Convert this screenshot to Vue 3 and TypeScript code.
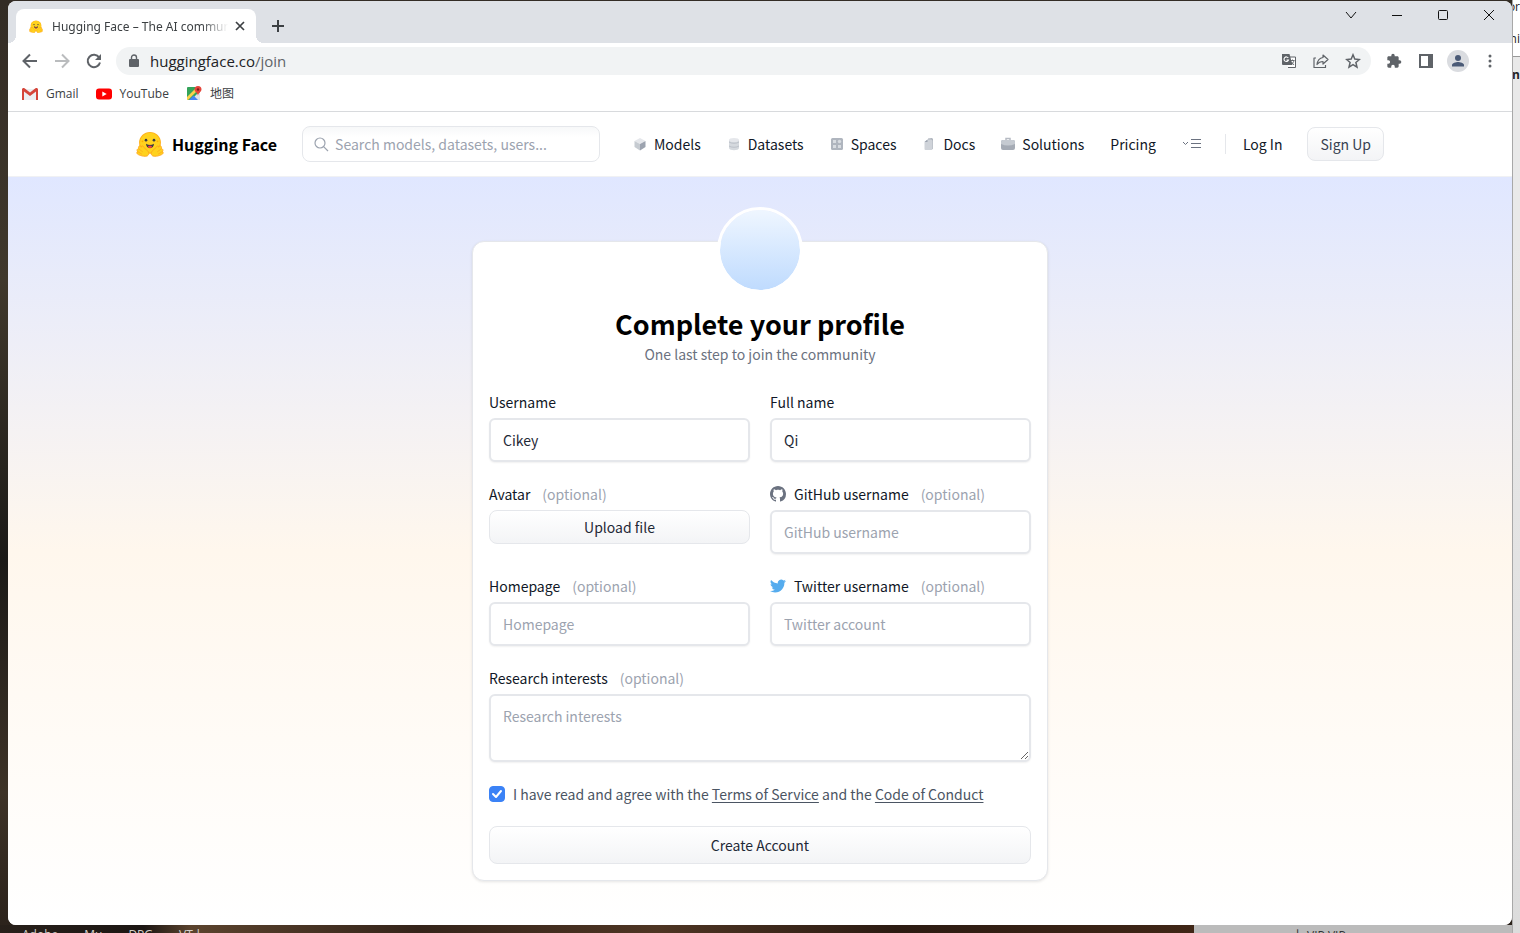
<script setup lang="ts">
import { ref } from 'vue'

const username = ref('Cikey')
const fullName = ref('Qi')
const github = ref('')
const homepage = ref('')
const twitter = ref('')
const interests = ref('')
const agreed = ref(true)
const search = ref('')

type NavIcon = 'cube' | 'data' | 'grid' | 'docs' | 'case' | null
const navItems: { label: string; icon: NavIcon }[] = [
  { label: 'Models', icon: 'cube' },
  { label: 'Datasets', icon: 'data' },
  { label: 'Spaces', icon: 'grid' },
  { label: 'Docs', icon: 'docs' },
  { label: 'Solutions', icon: 'case' },
  { label: 'Pricing', icon: null },
]
const taskLabels = ['Adobe', 'Mu', 'DPG', 'VT-l']
</script>

<template>
  <div class="desktop">
    <svg class="sprites" width="0" height="0" aria-hidden="true">
      <symbol id="hug" viewBox="0 0 95 88">
        <circle cx="47.5" cy="40" r="37" fill="#ffb01a" />
        <circle cx="47.5" cy="40" r="34" fill="#ffd21e" />
        <path d="M15 50c-5-1-8 4-6 10-5 0-7 5-4 9-4 4-2 9 3 11 10 5 24 8 31 4 7-5 5-14-2-19L25 54c-2-5-7-6-7 1zM80 50c5-1 8 4 6 10 5 0 7 5 4 9 4 4 2 9-3 11-10 5-24 8-31 4-7-5-5-14 2-19l12-11c2-5 7-6 7 1z" fill="#ffd21e" stroke="#ffa51c" stroke-width="3" stroke-linejoin="round" />
        <path d="M10 61l12 9M6 70l13 8M85 61l-12 9M89 70l-13 8" stroke="#ffa51c" stroke-width="2.500" stroke-linecap="round" />
        <circle cx="34" cy="31" r="4.500" fill="#3a3b45" /><circle cx="61" cy="31" r="4.500" fill="#3a3b45" />
        <circle cx="22" cy="35" r="3" fill="#ffad03" /><circle cx="73" cy="35" r="3" fill="#ffad03" />
        <path d="M34 43c5 3 9 4 13.500 4s8.500-1 13.500-4c0 9-6 15-13.500 15S34 52 34 43" fill="#3a3b45" />
        <path d="M40 53c3-4 6-3 7.500-2 1.500-1 4.500-2 7.500 2-4 6-11 6-15 0" fill="#f94040" />
      </symbol>
    </svg>

    <main class="window">
      <header class="tabstrip">
        <div class="tab">
          <svg class="favicon" viewBox="0 0 95 88"><use href="#hug" /></svg>
          <span class="tab-title">Hugging Face – The AI community building the future.</span>
          <button class="bare" aria-label="Close tab">
            <svg width="10" height="10" viewBox="0 0 10 10" stroke="#3c4043" stroke-width="1.700"><path d="M1 1l8 8M9 1l-8 8" /></svg>
          </button>
        </div>
        <button class="bare new-tab" aria-label="New tab">
          <svg width="12" height="12" viewBox="0 0 12 12" stroke="#3c4043" stroke-width="2"><path d="M6 0v12M0 6h12" /></svg>
        </button>
        <div class="controls">
          <button class="bare" aria-label="Search tabs"><svg width="12" height="12" viewBox="0 0 12 12"><path d="M1 3l5 6 5-6" /></svg></button>
          <button class="bare" aria-label="Minimize"><svg width="12" height="12" viewBox="0 0 12 12"><path d="M1 6.500h10" /></svg></button>
          <button class="bare" aria-label="Maximize"><svg width="12" height="12" viewBox="0 0 12 12"><rect x="1.500" y="1.500" width="9" height="9" rx="1" /></svg></button>
          <button class="bare" aria-label="Close"><svg width="12" height="12" viewBox="0 0 12 12"><path d="M1 1l10 10M11 1L1 11" /></svg></button>
        </div>
      </header>

      <div class="toolbar">
        <button class="bare" aria-label="Back"><svg width="16" height="16" viewBox="0 0 16 16" fill="none" stroke="#5f6368" stroke-width="2"><path d="M15 8H2M8 1.500L1.500 8 8 14.500" /></svg></button>
        <button class="bare" aria-label="Forward"><svg width="16" height="16" viewBox="0 0 16 16" fill="none" stroke="#babcbe" stroke-width="2"><path d="M1 8h13M8 1.500L14.500 8 8 14.500" /></svg></button>
        <button class="bare" aria-label="Reload"><svg width="16" height="16" viewBox="0 0 16 16"><path d="M13.200 4.600A6.200 6.200 0 1 0 14 9.500" fill="none" stroke="#5f6368" stroke-width="2" /><path d="M15 1v6H9z" fill="#5f6368" /></svg></button>
        <div class="omnibox">
          <svg width="10" height="14" viewBox="0 0 10 14"><rect x="0" y="5" width="10" height="8" rx="1" fill="#5f6368" /><path d="M2.500 6V3.500a2.500 2.500 0 0 1 5 0V6" fill="none" stroke="#5f6368" stroke-width="1.400" /></svg>
          <span class="url">huggingface.co<span class="path">/join</span></span>
          <button class="bare" aria-label="Translate">
            <svg width="16" height="16" viewBox="0 0 16 16"><path d="M5 4h9.500v10.500H7" fill="#fff" stroke="#5f6368" /><path d="M1 1h7.500l3 11H2a1 1 0 0 1-1-1z" fill="#5f6368" /><path d="M7.300 5A2.300 2.300 0 1 0 7.500 7H5.500" fill="none" stroke="#fff" stroke-width="1.100" /><path d="M9.500 7.500h4M11.500 6.500v1M13 7.500c-.5 2-1.500 3-3 4M10.500 9l2.500 3" fill="none" stroke="#5f6368" stroke-width=".9" /></svg>
          </button>
          <button class="bare" aria-label="Share">
            <svg width="16" height="16" viewBox="0 0 16 16" fill="none" stroke="#5f6368" stroke-width="1.200" stroke-linejoin="round"><path d="M3 5H1v9.500h11.500V12" /><path d="M10 2l5 4.500-5 4.500V8.500c-3 0-4.500 1-6 3 .5-4 2.500-6.500 6-7z" /></svg>
          </button>
          <button class="bare" aria-label="Bookmark">
            <svg width="16" height="16" viewBox="0 0 16 16" fill="none" stroke="#5f6368" stroke-width="1.500"><path d="M8 1.800l1.800 4.300 4.600.4-3.500 3 1.100 4.600L8 11.700l-4 2.400 1.100-4.600-3.500-3 4.600-.4z" /></svg>
          </button>
        </div>
        <div class="tools">
          <button class="bare" aria-label="Extensions"><svg width="16" height="16" viewBox="0 0 24 24" fill="#5f6368"><path d="M20.500 11H19V7c0-1.100-.9-2-2-2h-4V3.500a2.500 2.500 0 0 0-5 0V5H4c-1.100 0-2 .9-2 2v3.800h1.500a2.700 2.700 0 0 1 0 5.400H2V20c0 1.100.9 2 2 2h3.800v-1.500a2.700 2.700 0 0 1 5.400 0V22H17c1.100 0 2-.9 2-2v-4h1.500a2.500 2.500 0 0 0 0-5" /></svg></button>
          <button class="bare" aria-label="Side panel"><svg width="16" height="16" viewBox="0 0 16 16"><path d="M1 1h14v14H1zm2 2v10h7V3z" fill="#5f6368" fill-rule="evenodd" /></svg></button>
          <button class="bare profile" aria-label="Profile"><svg width="14" height="14" viewBox="0 0 14 14" fill="#4a5a76"><circle cx="7" cy="4" r="3" /><path d="M1 12.500V11c0-2 4-3 6-3s6 1 6 3v1.500z" /></svg></button>
          <button class="bare" aria-label="Menu"><svg width="16" height="16" viewBox="0 0 16 16" fill="#5f6368"><circle cx="8" cy="3" r="1.500" /><circle cx="8" cy="8" r="1.500" /><circle cx="8" cy="13" r="1.500" /></svg></button>
        </div>
      </div>

      <nav class="bookmarks" aria-label="Bookmarks">
        <a href="#"><svg width="16" height="16" viewBox="0 0 16 16"><path d="M2 3h12v11H2z" fill="#eceff1" /><path d="M0 3.500V14h2V5.500L8 10l6-4.500V14h2V3.500c0-1.500-1.500-2-2.500-1.200L8 6.500 2.500 2.300C1.500 1.500 0 2 0 3.500" fill="#d5453a" /></svg>Gmail</a>
        <a href="#"><svg width="16" height="16" viewBox="0 0 16 16"><rect y="2.500" width="16" height="11" rx="3" fill="#f00" /><path d="M6.300 5.500v5L10.700 8z" fill="#fff" /></svg>YouTube</a>
        <a href="#"><svg width="16" height="16" viewBox="0 0 16 16"><rect x="1" y="1" width="13" height="13" rx="1" fill="#34a35a" /><path d="M5 14L13 6l1 1v7z" fill="#dfe3e8" /><path d="M3 14l4.500-4.500L12 14z" fill="#4285f4" /><path d="M1 11l8-8 2 2-9 9H1z" fill="#fbd14b" /><path d="M12 0a3.500 3.500 0 0 0-3.500 3.500C8.500 6 12 7 12 10c0-3 3.500-4 3.500-6.500A3.500 3.500 0 0 0 12 0" fill="#e5443a" /><circle cx="12" cy="3.500" r="1.200" fill="#7c201b" /></svg>地图</a>
      </nav>

      <div class="site">
        <header class="nav">
          <div class="nav-inner">
            <a class="brand" href="#"><svg width="28" height="26" viewBox="0 0 95 88"><use href="#hug" /></svg>Hugging Face</a>
            <label class="search">
              <svg width="16" height="16" viewBox="0 0 16 16" fill="none" stroke="#9ca3af" stroke-width="1.200"><circle cx="7" cy="7" r="5" /><path d="M10.600 10.600L15 15" /></svg>
              <input v-model="search" type="search" aria-label="Search" placeholder="Search models, datasets, users..." />
            </label>
            <nav class="links" aria-label="Main">
              <a v-for="item in navItems" :key="item.label" href="#">
                <svg v-if="item.icon" width="14" height="14" viewBox="0 0 14 14">
                  <g v-if="item.icon === 'cube'"><path d="M7 1l5.500 3L7 7 1.500 4z" fill="#e5e7eb" /><path d="M1.500 4L7 7v6.500L1.500 10z" fill="#c6cbd1" /><path d="M12.500 4L7 7v6.500l5.500-3.500z" fill="#9ca3af" /></g>
                  <g v-else-if="item.icon === 'data'"><path d="M2 3v8c0 3 10 3 10 0V3z" fill="#d5d9de" /><ellipse cx="7" cy="3" rx="5" ry="2" fill="#e5e7eb" /><path d="M2 5c2 1.700 8 1.700 10 0M2 9c2 1.700 8 1.700 10 0" fill="none" stroke="#bcc1c9" /></g>
                  <g v-else-if="item.icon === 'grid'"><rect x="1" y="1" width="12" height="12" rx="1.500" fill="#afb5be" /><path d="M3 3h3v3H3zM3 8h3v3H3zM8 8h3v3H8z" fill="#d8dce1" /><circle cx="9.500" cy="4.500" r="1.700" fill="#d8dce1" /></g>
                  <g v-else-if="item.icon === 'docs'"><path d="M6 1.500L10 1l1 1v10H6z" fill="#aeb4bd" /><path d="M2.500 5l3-2.500H9q1.500 0 1.500 1.500v8q0 1-1 1h-6q-1 0-1-1z" fill="#cfd3d9" /><path d="M2.500 5h3V2.500z" fill="#9ca3af" /></g>
                  <g v-else><path d="M5 3V1.500h4V3" fill="none" stroke="#b6bbc3" stroke-width="1.500" /><rect y="3" width="14" height="10" rx="2" fill="#a5abb5" /><path d="M0 5q0-2 2-2h10q2 0 2 2v2q-7 3-14 0z" fill="#c5cad1" /></g>
                </svg>
                {{ item.label }}
              </a>
              <button class="bare" aria-label="More"><svg width="20" height="14" viewBox="0 0 20 14" fill="none" stroke="#6b7280"><path d="M1 5l2.500 2.500L6 5M9 2.500h10M9 6.500h10M9 10.500h10" /></svg></button>
            </nav>
            <div class="account">
              <a href="#">Log In</a>
              <button class="soft signup">Sign Up</button>
            </div>
          </div>
        </header>

        <section class="hero">
          <form class="card" @submit.prevent>
            <div class="avatar"></div>
            <h1>Complete your profile</h1>
            <p class="subtitle">One last step to join the community</p>
            <div class="fields">
              <div class="field">
                <label for="username">Username</label>
                <input id="username" v-model="username" type="text" />
              </div>
              <div class="field">
                <label for="fullname">Full name</label>
                <input id="fullname" v-model="fullName" type="text" />
              </div>
              <div class="field">
                <label for="upload">Avatar <span class="optional">(optional)</span></label>
                <button id="upload" type="button" class="soft upload">Upload file</button>
              </div>
              <div class="field">
                <label for="github">
                  <svg width="16" height="16" viewBox="0 0 16 16" fill="#6b7280"><path d="M8 0C3.580 0 0 3.580 0 8c0 3.540 2.290 6.530 5.470 7.590.4.070.55-.17.55-.38 0-.19-.01-.82-.01-1.490-2.010.37-2.530-.49-2.690-.94-.09-.23-.48-.94-.82-1.130-.28-.15-.68-.52-.01-.53.63-.01 1.080.58 1.230.82.72 1.210 1.870.87 2.330.66.07-.52.28-.87.51-1.070-1.780-.2-3.640-.89-3.640-3.950 0-.87.31-1.590.82-2.150-.08-.2-.36-1.020.08-2.120 0 0 .67-.21 2.200.82.64-.18 1.320-.27 2-.27s1.360.09 2 .27c1.530-1.040 2.200-.82 2.200-.82.44 1.100.16 1.920.08 2.120.51.56.82 1.270.82 2.150 0 3.070-1.870 3.750-3.650 3.950.29.25.54.73.54 1.480 0 1.070-.01 1.930-.01 2.200 0 .21.15.46.55.38A8.010 8.010 0 0 0 16 8c0-4.420-3.580-8-8-8" /></svg>
                  GitHub username <span class="optional">(optional)</span>
                </label>
                <input id="github" v-model="github" type="text" placeholder="GitHub username" />
              </div>
              <div class="field">
                <label for="homepage">Homepage <span class="optional">(optional)</span></label>
                <input id="homepage" v-model="homepage" type="text" placeholder="Homepage" />
              </div>
              <div class="field">
                <label for="twitter">
                  <svg width="16" height="16" viewBox="0 0 24 24" fill="#55acee"><path d="M23.950 4.570a10 10 0 0 1-2.820.77 4.960 4.960 0 0 0 2.160-2.720c-.95.55-2 .95-3.130 1.180a4.920 4.920 0 0 0-8.380 4.480C7.690 8.090 4.070 6.130 1.640 3.160a4.920 4.920 0 0 0 1.520 6.570 4.900 4.900 0 0 1-2.230-.61v.06c0 2.380 1.700 4.370 3.950 4.830a5 5 0 0 1-2.210.08 4.940 4.940 0 0 0 4.600 3.420A9.870 9.870 0 0 1 0 19.540a13.990 13.990 0 0 0 7.550 2.210c9.050 0 14-7.500 14-13.980 0-.21 0-.42-.02-.63a9.940 9.940 0 0 0 2.420-2.570" /></svg>
                  Twitter username <span class="optional">(optional)</span>
                </label>
                <input id="twitter" v-model="twitter" type="text" placeholder="Twitter account" />
              </div>
              <div class="field wide">
                <label for="interests">Research interests <span class="optional">(optional)</span></label>
                <textarea id="interests" v-model="interests" placeholder="Research interests"></textarea>
              </div>
            </div>
            <div class="terms">
              <input id="agree" v-model="agreed" type="checkbox" />
              <label for="agree">I have read and agree with the <a href="#">Terms of Service</a> and the <a href="#">Code of Conduct</a></label>
            </div>
            <button class="soft create">Create Account</button>
          </form>
        </section>
      </div>
    </main>

    <aside class="behind"><span>or</span><span>ni</span><b>in</b></aside>
    <footer class="shelf">
      <div class="shelf-left"><span v-for="t in taskLabels" :key="t">{{ t }}</span></div>
      <div class="shelf-right">上 VIP VIP</div>
    </footer>
  </div>
</template>

<style>
body {
  margin: 0;
}
</style>

<style scoped>
* {
  box-sizing: border-box;
}
.desktop {
  display: grid;
  grid-template-columns: 8px minmax(0, 1fr) 8px;
  grid-template-rows: auto 8px;
  min-height: 100vh;
  padding-top: 1px;
  background: linear-gradient(180deg, #332c25, #40382c 30%, #1c1a17 60%, #3e3327 85%, #2b221b);
  font-family: 'Noto Sans CJK SC', 'Noto Sans', sans-serif;
  font-size: 14px;
  line-height: 24px;
}
.sprites {
  position: absolute;
}
.window {
  grid-column: 2;
  grid-row: 1;
  display: flex;
  flex-direction: column;
  overflow: hidden;
  border-radius: 8px;
  background: #fff;
}
.bare {
  display: flex;
  align-items: center;
  justify-content: center;
  padding: 0;
  border: 0;
  background: none;
}
svg {
  display: block;
  flex: none;
}
a {
  color: inherit;
  text-decoration: none;
}

.tabstrip {
  display: flex;
  align-items: flex-end;
  height: 42px;
  padding-left: 8px;
  background: #dee1e6;
  font-family: 'Noto Sans', 'Open Sans', sans-serif;
  font-size: 12px;
}
.tab {
  position: relative;
  display: flex;
  align-items: center;
  width: 240px;
  height: 34px;
  padding: 0 11px 0 13px;
  border-radius: 8px 8px 0 0;
  background: #fff;
  color: #3c4043;
}
.tab::before,
.tab::after {
  content: '';
  position: absolute;
  bottom: 0;
  width: 8px;
  height: 8px;
}
.tab::before {
  right: 100%;
  background: radial-gradient(circle at 0 0, transparent 8px, #fff 8px);
}
.tab::after {
  left: 100%;
  background: radial-gradient(circle at 100% 0, transparent 8px, #fff 8px);
}
.favicon {
  width: 14px;
  height: 13px;
}
.tab-title {
  flex: 1;
  margin: 0 7px 0 9px;
  padding-top: 1px;
  overflow: hidden;
  white-space: nowrap;
  mask-image: linear-gradient(90deg, #000 85%, transparent);
}
.new-tab {
  width: 28px;
  height: 34px;
  margin-left: 8px;
}
.controls {
  display: flex;
  align-self: flex-start;
  margin-left: auto;
}
.controls .bare {
  width: 46px;
  height: 28px;
}
.controls svg {
  fill: none;
  stroke: #111;
}

.toolbar {
  display: flex;
  align-items: center;
  gap: 16px;
  height: 36px;
  padding: 0 14px;
}
.omnibox {
  flex: 1;
  display: flex;
  align-items: center;
  gap: 16px;
  height: 28px;
  margin-left: -2px;
  padding: 0 10px 0 13px;
  border-radius: 14px;
  background: #f1f3f4;
}
.url {
  flex: 1;
  margin-left: -5px;
  color: #202124;
  font-family: 'Open Sans', 'Noto Sans', sans-serif;
  font-size: 15px;
}
.path {
  color: #5f6368;
}
.tools {
  display: flex;
  align-items: center;
  gap: 16px;
}
.omnibox + .tools {
  margin-left: -1px;
}
.profile {
  width: 22px;
  height: 22px;
  margin: 0 -3px;
  border-radius: 50%;
  background: #dadce0;
}
.bookmarks {
  display: flex;
  align-items: center;
  gap: 17px;
  height: 33px;
  padding: 0 14px 3px;
  border-bottom: 1px solid #d8dadd;
  color: #3c4043;
  font-family: 'Open Sans', 'Noto Sans CJK SC', sans-serif;
  font-size: 12px;
}
.bookmarks a {
  display: flex;
  align-items: center;
  gap: 8px;
}

.site {
  flex: 1;
  display: flex;
  flex-direction: column;
}
.nav {
  border-bottom: 1px solid #f0f1f4;
}
.nav-inner {
  display: flex;
  align-items: center;
  max-width: 1280px;
  height: 64px;
  margin: 0 auto;
  padding: 0 16px;
  color: #111827;
  white-space: nowrap;
}
.brand {
  display: flex;
  align-items: center;
  gap: 8px;
  margin-right: 25px;
  color: #000;
  font-size: 16px;
  font-weight: 700;
}
.search {
  flex: 1;
  display: flex;
  align-items: center;
  gap: 6px;
  height: 36px;
  margin-right: 33px;
  padding: 0 10px;
  border: 1px solid #e5e7eb;
  border-radius: 8px;
  background: linear-gradient(180deg, #f7f8f9, #fff 30%);
}
.search input {
  flex: 1;
  min-width: 0;
  padding: 0;
  border: 0;
  outline: 0;
  background: none;
  font: inherit;
}
::placeholder {
  color: #9ca3af;
  opacity: 1;
}
.links {
  display: flex;
  align-items: center;
  gap: 26px;
}
.links a {
  display: flex;
  align-items: center;
  gap: 7px;
}
.account {
  display: flex;
  align-items: center;
  gap: 25px;
  margin-left: 23px;
}
.account::before {
  content: '';
  width: 1px;
  height: 20px;
  margin-right: -8px;
  background: #e5e7eb;
}
.soft {
  border: 1px solid #e5e7eb;
  border-radius: 8px;
  background: linear-gradient(180deg, #fff, #f3f4f6);
  color: #1f2937;
  font: inherit;
  line-height: 24px;
}
.signup {
  height: 34px;
  padding: 0 12px;
  color: #374151;
}

.hero {
  flex: 1;
  padding: 64px 16px 44px;
  background: linear-gradient(180deg, #e0e7ff, #fff7ed 50%, #fff);
}
.card {
  display: flex;
  flex-direction: column;
  max-width: 576px;
  margin: 0 auto;
  padding: 0 16px 16px;
  border: 1px solid #e5e7eb;
  border-radius: 12px;
  background: #fff;
  box-shadow: 0 1px 3px rgb(0 0 0 / 10%);
}
.avatar {
  align-self: center;
  width: 86px;
  height: 86px;
  margin-top: -35px;
  border: 3px solid #fff;
  border-radius: 50%;
  background: linear-gradient(180deg, #eff6ff, #bfdbfe) padding-box;
}
h1 {
  margin: 13px 0 0;
  color: #000;
  font-size: 27px;
  line-height: 36px;
  text-align: center;
}
.subtitle {
  margin: 0 0 24px;
  color: #6b7280;
  text-align: center;
}
.fields {
  display: grid;
  grid-template-columns: repeat(2, minmax(0, 1fr));
  gap: 20px;
}
.field {
  display: flex;
  flex-direction: column;
  gap: 4px;
}
.field label {
  display: flex;
  align-items: center;
  color: #111827;
}
.field label svg {
  margin-right: 8px;
}
.optional {
  margin-left: 12px;
  color: #9ca3af;
}
.wide {
  grid-column: 1 / -1;
}
.field input,
textarea {
  display: block;
  width: 100%;
  height: 44px;
  padding: 8px 12px;
  border: 2px solid #e5e7eb;
  border-radius: 6px;
  outline: 0;
  background: #fff;
  box-shadow: 0 1px 2px rgb(0 0 0 / 6%);
  color: #1f2937;
  font: inherit;
}
.field textarea {
  height: 68px;
  resize: vertical;
}
.upload {
  height: 34px;
}
.terms {
  display: flex;
  align-items: center;
  gap: 8px;
  margin: 20px 0;
  color: #4b5563;
}
.terms input {
  appearance: none;
  width: 16px;
  height: 16px;
  margin: 0;
  border: 1px solid #9ca3af;
  border-radius: 4px;
}
.terms input:checked {
  border-color: #3b82f6;
  background: #3b82f6 url("data:image/svg+xml,%3Csvg viewBox='0 0 16 16' xmlns='http://www.w3.org/2000/svg'%3E%3Cpath d='M4 8l3 3 5-6' fill='none' stroke='white' stroke-width='2' stroke-linecap='round' stroke-linejoin='round'/%3E%3C/svg%3E") center / 16px;
}
.terms a {
  text-decoration: underline;
  text-underline-offset: 2px;
}
.create {
  height: 38px;
}

.behind {
  grid-column: 3;
  grid-row: 1 / 3;
  display: flex;
  flex-direction: column;
  align-items: flex-end;
  gap: 18px;
  margin-top: -1px;
  overflow: hidden;
  border-left: 1px solid #a8a8a8;
  background: linear-gradient(180deg, #fff 0 56px, #999 56px 57px, #e9e9e9 57px 240px, #dcdcdc);
  color: #222;
  font-family: 'Open Sans', sans-serif;
  font-size: 12px;
  line-height: 14px;
}
.behind b {
  padding-top: 4px;
}
.shelf {
  grid-column: 1 / 3;
  grid-row: 2;
  display: flex;
  overflow: hidden;
  font-family: 'Open Sans', 'Noto Sans CJK SC', sans-serif;
  font-size: 12px;
  line-height: 16px;
}
.shelf-left {
  flex: 1;
  display: flex;
  gap: 26px;
  padding: 2px 0 0 22px;
  background: linear-gradient(90deg, #28201a, #1c1613 12%, #5b432d 16%, #35241a 35%, #4e3523 55%, #2c1b12 75%, #402616);
  color: #d5d0ca;
}
.shelf-right {
  width: 318px;
  padding: 3px 0 0 98px;
  background: #bbb;
  color: #333;
}
</style>
